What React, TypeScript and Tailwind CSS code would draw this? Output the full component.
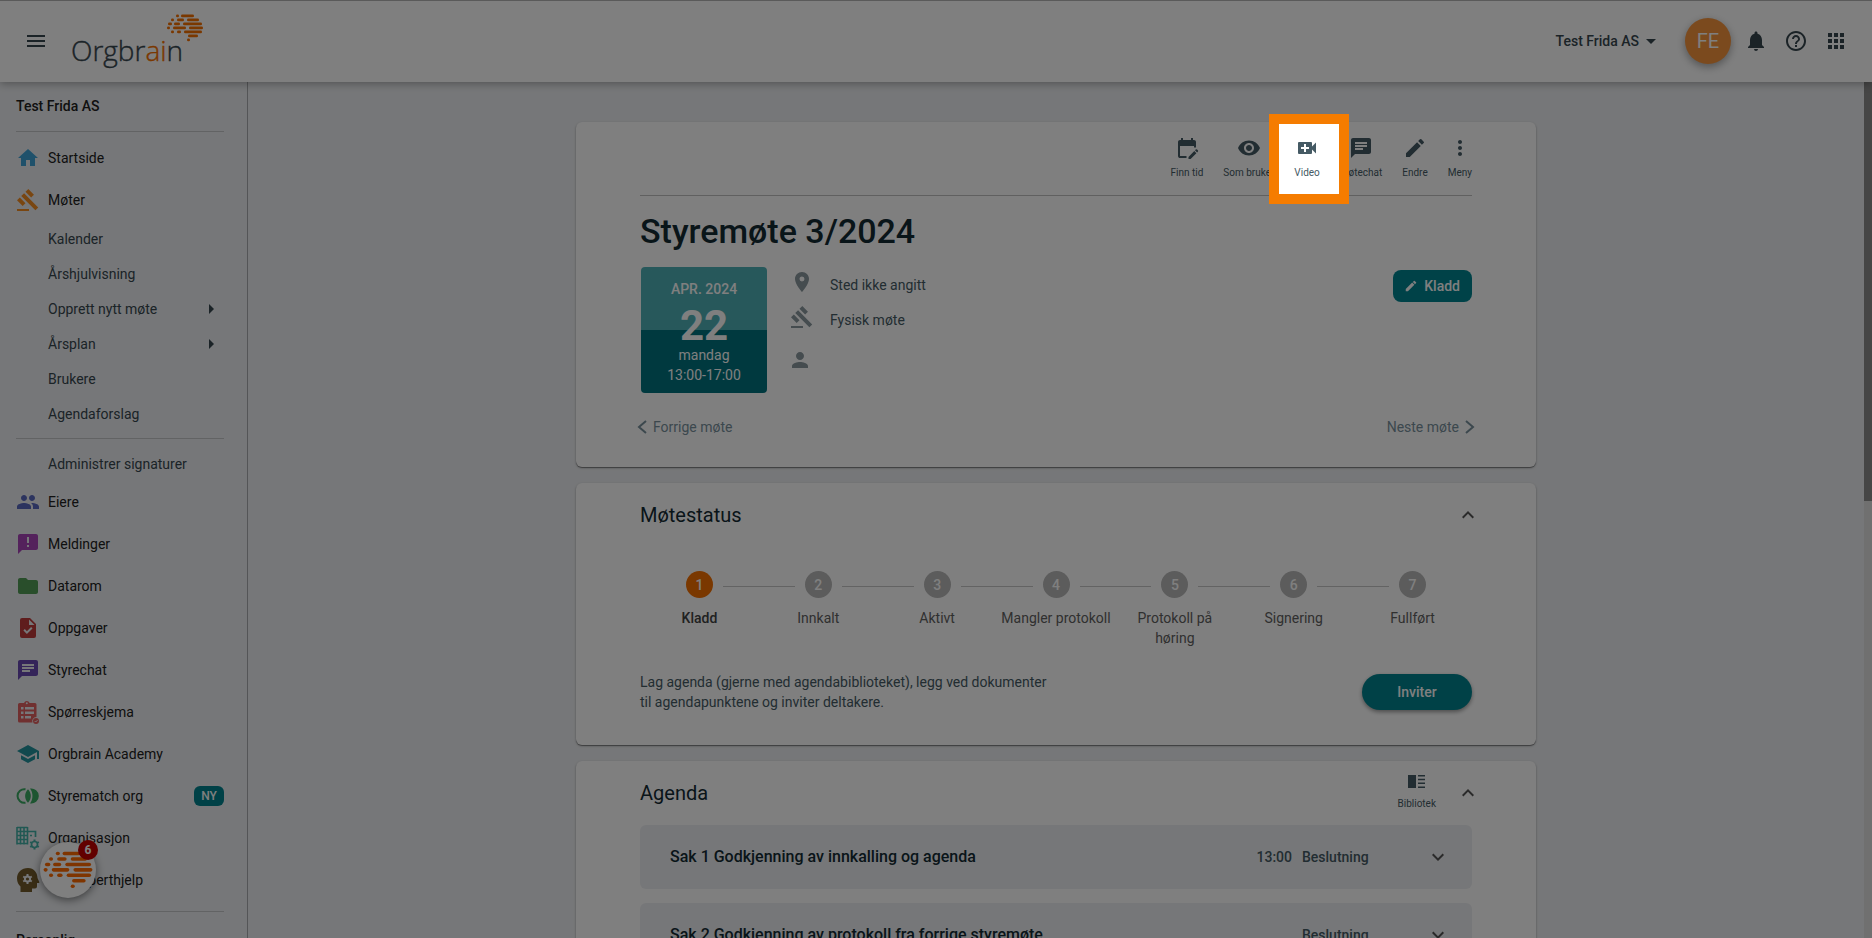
import type { ReactNode } from "react";
import type { IconType } from "react-icons";
import {
  MdAnnouncement,
  MdApps,
  MdArrowDropDown,
  MdArrowRight,
  MdChat,
  MdEdit,
  MdExpandLess,
  MdExpandMore,
  MdFolder,
  MdGavel,
  MdHelpOutline,
  MdHome,
  MdMenu,
  MdMoreVert,
  MdNotifications,
  MdPeople,
  MdPerson,
  MdPlace,
  MdSchool,
  MdVisibility,
} from "react-icons/md";

// [x, y, width] of every dash in the brain mark, on a 36x28 grid
const BRAIN_DASHES = [
  [9, 1, 3], [14, 1, 13],
  [4, 5, 3], [10, 5, 7], [20, 5, 12],
  [1, 9, 4], [7, 9, 6], [16, 9, 19],
  [0, 13, 3], [6, 13, 13], [22, 13, 14],
  [4, 17, 3], [10, 17, 4], [17, 17, 18],
  [21, 21, 10],
  [20, 25, 3],
];

function BrainMark({ className }: { className: string }) {
  return (
    <svg viewBox="0 0 36 28" className={className} fill="currentColor" aria-hidden="true">
      {BRAIN_DASHES.map(([x, y, w]) => (
        <rect key={`${x}-${y}`} x={x} y={y - 0.4} width={w} height={2.6} rx={1.3} />
      ))}
    </svg>
  );
}

function Logo() {
  return (
    <a href="#" aria-label="Orgbrain" className="relative block h-14 w-[136px]">
      <svg viewBox="0 0 136 56" className="h-14 w-[136px]">
        <text
          x="-1"
          y="48"
          fontFamily="'Open Sans', sans-serif"
          fontSize="28"
          fontWeight="300"
          fill="#37474f"
          stroke="#37474f"
          strokeWidth="0.4"
        >
          Orgbr
          <tspan fill="#f57000" stroke="#f57000">ai</tspan>n
        </text>
      </svg>
      <BrainMark className="absolute top-px right-[5px] h-7 w-9 text-[#f57000]" />
    </a>
  );
}

function CalendarEdit({ className }: { className?: string }) {
  return (
    <svg viewBox="0 0 24 24" className={className} fill="currentColor" aria-hidden="true">
      <path d="M5 22q-.8 0-1.400-.6T3 20V6q0-.8.6-1.400T5 4h1V2h2v2h8V2h2v2h1q.8 0 1.400.6T21 6v5.500h-2V10H5v10h6.500v2H5Zm17.100-5.600-2.100-2.100.7-.7q.3-.3.700-.3t.7.3l.7.7q.3.3.300.7t-.3.700l-.7.700ZM13.500 23v-2.100l5.800-5.800 2.100 2.100-5.800 5.800h-2.100Z" />
    </svg>
  );
}

function VideoPlus({ className }: { className?: string }) {
  return (
    <svg viewBox="0 0 24 24" className={className} fill="currentColor" aria-hidden="true">
      <path d="M17 10.500V7a1 1 0 0 0-1-1H4a1 1 0 0 0-1 1v10a1 1 0 0 0 1 1h12a1 1 0 0 0 1-1v-3.500l4 4v-11l-4 4ZM14 13h-3v3H9v-3H6v-2h3V8h2v3h3v2Z" />
    </svg>
  );
}

function LibraryIcon({ className }: { className?: string }) {
  return (
    <svg viewBox="0 0 24 24" className={className} fill="currentColor" aria-hidden="true">
      <path d="M3 5h8v13H3zM13 5h7v1.500h-7zM13 8.800h7v1.500h-7zM13 12.600h7v1.500h-7zM13 16.500h7V18h-7z" />
    </svg>
  );
}

function TaskFile({ className }: { className?: string }) {
  return (
    <svg viewBox="0 0 24 24" className={className} fill="currentColor" aria-hidden="true">
      <path d="M14 2H6a2 2 0 0 0-2 2v16a2 2 0 0 0 2 2h12a2 2 0 0 0 2-2V8l-6-6Zm-3.100 16-3.500-3.500 1.400-1.400 2.100 2.100 4.200-4.200 1.400 1.400L10.900 18ZM13 9V3.500L18.500 9H13Z" />
    </svg>
  );
}

function SurveyIcon({ className }: { className?: string }) {
  return (
    <svg viewBox="0 0 24 24" className={className} fill="currentColor" aria-hidden="true">
      <path
        fillRule="evenodd"
        d="M3.500 3H8a3 3 0 0 1 5.600 0H19a1.500 1.500 0 0 1 1.500 1.500V17a4 4 0 0 0-4 5.500h-13A1.500 1.500 0 0 1 2 21V4.500A1.500 1.500 0 0 1 3.500 3Zm7.300-.7a1 1 0 1 0 0 2 1 1 0 0 0 0-2ZM5 7v2.500h2.500V7H5Zm4 0v2.500h9V7H9Zm-4 4.500V14h2.500v-2.500H5Zm4 0V14h9v-2.500H9ZM5 16v2.500h2.500V16H5Zm4 0v2.500h6V16H9Z"
      />
      <circle cx="20" cy="21" r="3" />
      <path d="m18.700 21 1 1 1.800-1.900" stroke="#edeff2" strokeWidth="1" fill="none" />
    </svg>
  );
}

function MatchIcon({ className }: { className?: string }) {
  return (
    <svg viewBox="0 0 24 24" className={className} fill="currentColor" aria-hidden="true">
      <path d="M9.500 5.300a6.800 6.800 0 1 0 0 13.400" fill="none" stroke="currentColor" strokeWidth="2" />
      <path d="M12 5.300c3.800 3.700 3.800 9.700 0 13.400-3.800-3.700-3.800-9.700 0-13.400Z" />
      <path d="M14 4.500a7.600 7.600 0 1 1 0 15c3.300-4.400 3.300-10.600 0-15Z" />
    </svg>
  );
}

function OrganisationIcon({ className }: { className?: string }) {
  return (
    <svg viewBox="0 0 24 24" className={className} fill="none" stroke="currentColor" aria-hidden="true">
      <path d="M1 1.500h10.500M1 5.500h10.500M1 9.500h10.500M1 13.500h10.500M1 17.500h10.500M1 1v17.500M4.500 1v17.500M8 1v17.500M11.500 1v17.500" strokeWidth="1.600" />
      <path d="M12 5.500h7.500V11M14 9.500h2" strokeWidth="1.700" />
      <circle cx="18.500" cy="18.500" r="3" strokeWidth="1.700" />
      <path d="M18.500 13.500v2M18.500 21.500v2M14.200 16l1.700 1M21.100 20l1.700 1M14.200 21l1.700-1M21.100 17l1.700-1" strokeWidth="2" />
    </svg>
  );
}

function ExpertIcon({ className }: { className?: string }) {
  return (
    <svg viewBox="0 0 24 24" className={className} fill="currentColor" aria-hidden="true">
      <path d="M12 0C5.500 0 1 4.600 1 10.500c0 3.800 1.500 6.200 3.500 8V24H16v-3.500h3a2 2 0 0 0 2-2V15h1.500c.8 0 1-.6.700-1.300L21.500 10C21.300 4.500 18 0 12 0Z" />
      <circle cx="11.500" cy="11" r="2.600" fill="none" stroke="#edeff2" strokeWidth="2" />
      <path
        d="M11.500 6v2M11.500 14v2M7.200 8.500l1.700 1M14.100 12.500l1.700 1M7.200 13.500l1.700-1M14.100 9.500l1.700-1"
        stroke="#edeff2"
        strokeWidth="2"
      />
    </svg>
  );
}

type IconComponent = IconType | ((props: { className?: string }) => ReactNode);

function NavItem({ icon: Icon, color, label, badge }: { icon: IconComponent; color: string; label: string; badge?: string }) {
  return (
    <a href="#" className="flex h-[42px] items-center gap-2 pr-[23px] pl-4 text-sm text-[#212121]">
      <Icon className={`h-6 w-6 shrink-0 opacity-85 ${color}`} />
      <span className="flex-1">{label}</span>
      {badge && (
        <span className="flex h-5 w-[30px] items-center justify-center rounded-md bg-[#00838f] text-xs font-medium text-white">
          {badge}
        </span>
      )}
    </a>
  );
}

function SubItem({ label, arrow }: { label: string; arrow?: boolean }) {
  return (
    <a href="#" className="flex h-[35px] items-center justify-between pr-6 pl-12 text-sm text-[#37474f]">
      {label}
      {arrow && <MdArrowRight className="h-6 w-6" />}
    </a>
  );
}

function SideDivider() {
  return <hr className="mr-[23px] ml-4 border-[#c4c6c9]" />;
}

const LOWER_NAV = [
  { icon: MdPeople, color: "text-[#3f51b5]", label: "Eiere" },
  { icon: MdAnnouncement, color: "text-[#9c27b0]", label: "Meldinger" },
  { icon: MdFolder, color: "text-[#388e3c]", label: "Datarom" },
  { icon: TaskFile, color: "text-[#b71c1c]", label: "Oppgaver" },
  { icon: MdChat, color: "text-[#512da8]", label: "Styrechat" },
  { icon: SurveyIcon, color: "text-[#e04848]", label: "Spørreskjema" },
  { icon: MdSchool, color: "text-[#00838f]", label: "Orgbrain Academy" },
  { icon: MatchIcon, color: "text-[#1b9e4b]", label: "Styrematch org", badge: "NY" },
  { icon: OrganisationIcon, color: "text-[#26a69a]", label: "Organisasjon" },
  { icon: ExpertIcon, color: "text-[#5d4108]", label: "Få eksperthjelp" },
];

function Sidebar() {
  return (
    <aside className="w-[248px] shrink-0 border-r border-[#a9abae]">
      <h2 className="flex h-[49px] items-center pb-0.5 pl-4 text-sm font-medium text-[#212121]">Test Frida AS</h2>
      <nav>
        <SideDivider />
        <div className="pt-[5px]">
          <NavItem icon={MdHome} color="text-[#2196d3]" label="Startside" />
          <NavItem icon={MdGavel} color="text-[#f57c00]" label="Møter" />
        </div>
        <SubItem label="Kalender" />
        <SubItem label="Årshjulvisning" />
        <SubItem label="Opprett nytt møte" arrow />
        <SubItem label="Årsplan" arrow />
        <SubItem label="Brukere" />
        <SubItem label="Agendaforslag" />
        <div className="py-[7px]">
          <SideDivider />
        </div>
        <SubItem label="Administrer signaturer" />
        {LOWER_NAV.map((item) => (
          <NavItem key={item.label} {...item} />
        ))}
        <div className="pt-2.5 pb-[18px]">
          <SideDivider />
        </div>
        <h2 className="pl-4 text-sm font-medium text-[#212121]">Personlig</h2>
      </nav>
    </aside>
  );
}

function Header() {
  return (
    <header className="relative z-10 flex h-[82px] shrink-0 items-center border-t border-[#b5b5b5] bg-white px-6 pb-0.5 shadow-[0_2px_8px_rgba(0,0,0,0.3)]">
      <button type="button" aria-label="Meny" className="mr-6 text-[#37474f]">
        <MdMenu className="h-6 w-6" />
      </button>
      <Logo />
      <div className="ml-auto flex items-center">
        <button type="button" className="mr-[22px] flex items-center text-sm font-medium text-[#37474f]">
          Test Frida AS
          <MdArrowDropDown className="h-6 w-6" />
        </button>
        <button
          type="button"
          className="mr-[13px] flex h-[46px] w-[46px] items-center justify-center rounded-full bg-[#f7943c] text-xl text-white shadow-[0_3px_8px_rgba(0,0,0,0.35)]"
        >
          FE
        </button>
        <div className="flex gap-4 text-[#37474f]">
          <button type="button" aria-label="Varsler"><MdNotifications className="h-6 w-6" /></button>
          <button type="button" aria-label="Hjelp"><MdHelpOutline className="h-6 w-6" /></button>
          <button type="button" aria-label="Apper"><MdApps className="h-6 w-6" /></button>
        </div>
      </div>
    </header>
  );
}

function ToolButton({ icon: Icon, label, gap = "gap-[7px]" }: { icon: IconComponent; label: string; gap?: string }) {
  return (
    <button type="button" className={`flex flex-col items-center text-[10px] leading-3 text-[#455a64] ${gap}`}>
      <Icon className="h-6 w-6" />
      {label}
    </button>
  );
}

function Toolbar() {
  return (
    <div className="flex justify-end gap-5 border-b border-[#c0c0c0] pt-3.5 pb-4">
      <ToolButton icon={CalendarEdit} label="Finn tid" />
      <ToolButton icon={MdVisibility} label="Som bruker" />
      {/* Tour step: the spread shadow dims the rest of the page */}
      <div className="relative z-50">
        <div className="absolute -top-3 -left-[15px] -z-10 h-[70px] w-[60px] bg-white shadow-[0_0_0_10px_#f57c00,0_0_0_4000px_rgba(0,0,0,0.5)]" />
        <ToolButton icon={VideoPlus} label="Video" />
      </div>
      <ToolButton icon={MdChat} label="Møtechat" />
      <ToolButton icon={MdEdit} label="Endre" />
      <ToolButton icon={MdMoreVert} label="Meny" />
    </div>
  );
}

function Card({ children }: { children: ReactNode }) {
  return (
    <section className="rounded-md bg-white px-16 shadow-[0_1px_1px_rgba(0,0,0,0.4),0_1px_3px_rgba(0,0,0,0.2)]">
      {children}
    </section>
  );
}

function MeetingCard() {
  return (
    <Card>
      <Toolbar />
      <h1 className="mt-[11px] text-[34px] leading-12 font-medium text-[#132a33]">Styremøte 3/2024</h1>
      <div className="mt-3 flex items-start pl-px">
        <div className="flex h-[126px] w-[126px] flex-col items-center rounded bg-linear-to-b from-[#4fb0b7] from-50% to-[#00737f] to-50% pt-3 text-sm leading-5 text-white">
          <span className="font-medium">APR. 2024</span>
          <span className="mt-2 text-[42px] leading-[38px] font-bold">22</span>
          <span>mandag</span>
          <span>13:00-17:00</span>
        </div>
        <ul className="ml-[23px] text-sm text-[#455a64]">
          <li className="flex h-[35px] items-center gap-4"><MdPlace className="mb-1.5 h-6 w-6 text-[#8a989e]" />Sted ikke angitt</li>
          <li className="flex h-[35px] items-center gap-4"><MdGavel className="mb-1.5 h-6 w-6 text-[#8a989e]" />Fysisk møte</li>
          <li className="-ml-0.5 flex h-[46px] items-center"><MdPerson className="h-6 w-6 text-[#8a989e]" /></li>
        </ul>
        <button
          type="button"
          className="mt-[3px] ml-auto flex h-8 items-center gap-1.5 rounded-lg bg-[#008591] pr-3 pl-[11px] text-sm font-medium text-white"
        >
          <MdEdit className="h-3.5 w-3.5" />
          Kladd
        </button>
      </div>
      <div className="-mx-[3px] flex justify-between pt-6 pb-[30px] text-sm text-[#78909c]">
        <button type="button" className="flex items-center gap-1.5">
          <svg viewBox="0 0 10 14" className="h-3.5 w-2.5" fill="none" stroke="currentColor" strokeWidth="2"><path d="m9 1-7 6 7 6" /></svg>
          Forrige møte
        </button>
        <button type="button" className="flex items-center gap-1.5">
          Neste møte
          <svg viewBox="0 0 10 14" className="h-3.5 w-2.5" fill="none" stroke="currentColor" strokeWidth="2"><path d="m1 1 7 6-7 6" /></svg>
        </button>
      </div>
    </Card>
  );
}

const STEPS = ["Kladd", "Innkalt", "Aktivt", "Mangler protokoll", "Protokoll på høring", "Signering", "Fullført"];

function StatusCard() {
  return (
    <Card>
      <div className="flex items-center justify-between pt-4">
        <h2 className="text-xl leading-8 text-[#132a33]">Møtestatus</h2>
        <button type="button" aria-label="Skjul møtestatus" className="-mr-2 text-[#555]"><MdExpandLess className="h-6 w-6" /></button>
      </div>
      <ol className="mt-10 grid grid-cols-7 text-center text-sm leading-5 text-[#616161]">
        {STEPS.map((step, i) => (
          <li key={step}>
            <div className="flex items-center">
              <span className={`mt-1 mr-2.5 h-px flex-1 ${i > 0 ? "bg-[#c6c6c6]" : ""}`} />
              <span
                className={`flex h-[27px] w-[27px] items-center justify-center rounded-full font-medium text-white ${i === 0 ? "bg-[#f57000]" : "bg-[#b8b8b8]"}`}
              >
                {i + 1}
              </span>
              <span className={`mt-1 ml-2.5 h-px flex-1 ${i < STEPS.length - 1 ? "bg-[#c6c6c6]" : ""}`} />
            </div>
            <p className={`mt-2.5 px-1 ${i === 0 ? "font-medium text-[#424242]" : ""}`}>{step}</p>
          </li>
        ))}
      </ol>
      <div className="flex items-center justify-between pt-6 pb-[33px]">
        <p className="max-w-[416px] text-sm leading-5 text-[#455a64]">
          Lag agenda (gjerne med agendabiblioteket), legg ved dokumenter til agendapunktene og inviter deltakere.
        </p>
        <button
          type="button"
          className="h-9 w-[110px] rounded-full bg-[#00838f] text-sm font-medium text-white shadow-[0_2px_4px_rgba(0,0,0,0.4)]"
        >
          Inviter
        </button>
      </div>
    </Card>
  );
}

const AGENDA = [
  { title: "Sak 1 Godkjenning av innkalling og agenda", time: "13:00", kind: "Beslutning" },
  { title: "Sak 2 Godkjenning av protokoll fra forrige styremøte", time: "", kind: "Beslutning" },
];

function AgendaCard() {
  return (
    <Card>
      <div className="flex h-16 items-center justify-between">
        <h2 className="text-xl leading-8 text-[#132a33]">Agenda</h2>
        <div className="flex items-center gap-5">
          <div className="pb-1.5">
            <ToolButton icon={LibraryIcon} label="Bibliotek" gap="gap-1" />
          </div>
          <button type="button" aria-label="Skjul agenda" className="-mr-2 text-[#555]"><MdExpandLess className="h-6 w-6" /></button>
        </div>
      </div>
      <ul className="flex flex-col gap-3.5">
        {AGENDA.map((item) => (
          <li key={item.title} className="flex h-16 items-center rounded-md bg-[#edeff2] pr-[22px] pl-[30px]">
            <h3 className="flex-1 text-base font-medium text-[#132a33]">{item.title}</h3>
            <span className="text-sm font-medium text-[#455a64]">{item.time}</span>
            <span className="ml-2.5 w-[124px] text-sm font-medium text-[#455a64]">{item.kind}</span>
            <button type="button" aria-label={`Vis ${item.title}`} className="text-[#555]"><MdExpandMore className="h-6 w-6" /></button>
          </li>
        ))}
      </ul>
    </Card>
  );
}

export default function App() {
  return (
    <div className="relative flex h-screen flex-col overflow-hidden bg-[#edeff2] font-['Roboto',sans-serif]">
      <Header />
      <div className="flex min-h-0 flex-1">
        <Sidebar />
        <main className="min-w-0 flex-1 px-6 pt-10">
          <div className="mx-auto flex max-w-[960px] flex-col gap-4">
            <MeetingCard />
            <StatusCard />
            <AgendaCard />
          </div>
        </main>
        <div className="w-2 shrink-0 bg-[#e0e0e0]">
          <div className="h-[49%] bg-[#8c8c8c]" />
        </div>
      </div>

      {/* Help launcher */}
      <button
        type="button"
        aria-label="Åpne hjelp, 6 nye"
        className="absolute bottom-10 left-10 flex h-14 w-14 items-center justify-center rounded-full bg-white shadow-[0_2px_8px_rgba(0,0,0,0.5)]"
      >
        <BrainMark className="h-[38px] w-[50px] text-[#ff6a00]" />
        <span className="absolute -top-0.5 -right-0.5 flex h-5 w-5 items-center justify-center rounded-full bg-[#c40000] text-xs font-bold text-white">
          6
        </span>
      </button>
    </div>
  );
}
